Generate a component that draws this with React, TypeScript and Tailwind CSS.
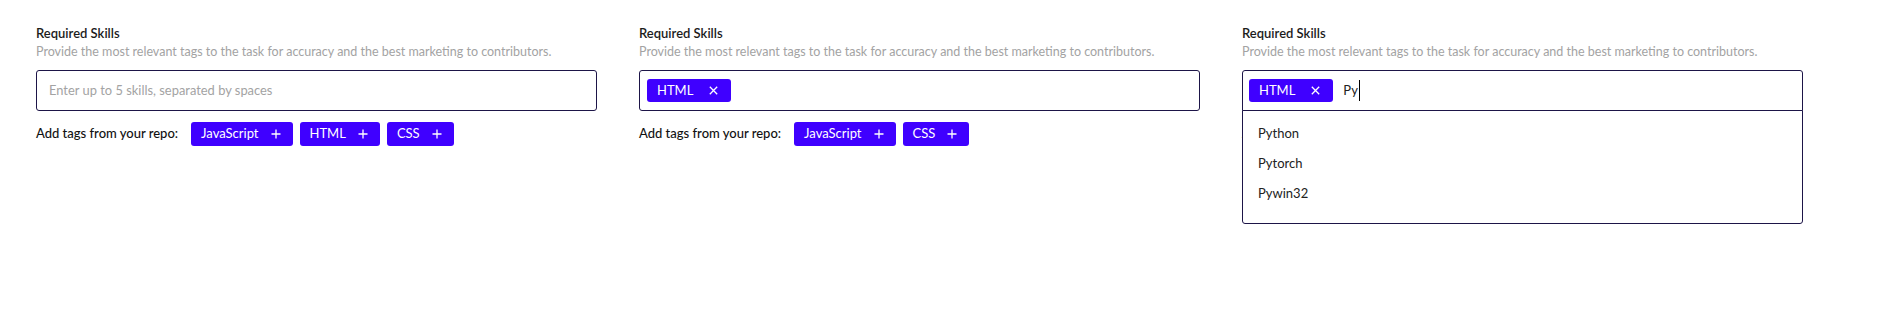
import React from "react";

const font = { fontFamily: "Lato, 'Open Sans', 'Liberation Sans', sans-serif" };

function Plus() {
  return (
    <svg width="10" height="10" viewBox="0 0 10 10" className="shrink-0">
      <path d="M5 0.5V9.5M0.5 5H9.5" stroke="white" strokeWidth="1.3" />
    </svg>
  );
}

function Cross() {
  return (
    <svg width="9" height="9" viewBox="0 0 9 9" className="shrink-0">
      <path d="M0.8 0.8L8.2 8.2M8.2 0.8L0.8 8.2" stroke="white" strokeWidth="1.3" />
    </svg>
  );
}

function AddButton({ label }: { label: string }) {
  return (
    <button className="h-[24px] flex items-center gap-[12px] pl-[10px] pr-[12px] bg-[#3f00ff] text-white text-[13px] rounded-[3px]">
      <span>{label}</span>
      <Plus />
    </button>
  );
}

function Chip({ label }: { label: string }) {
  return (
    <div className="h-[23px] flex items-center gap-[16px] pl-[10px] pr-[13px] bg-[#3f00ff] text-white text-[13px] rounded-[3px] shrink-0">
      <span>{label}</span>
      <Cross />
    </div>
  );
}

function Header() {
  return (
    <>
      <div className="text-[13px] leading-[18px] font-semibold text-[#1c1c1c]">Required Skills</div>
      <div className="mt-[2px] text-[12.5px] leading-[16px] text-[#a3a3a3]">
        Provide the most relevant tags to the task for accuracy and the best marketing to contributors.
      </div>
    </>
  );
}

function TagsRow({ tags }: { tags: string[] }) {
  return (
    <div className="mt-[11px] flex items-center">
      <span className="text-[13px] font-medium text-[#111] mr-[13px] whitespace-nowrap">Add tags from your repo:</span>
      <div className="flex gap-[7px]">
        {tags.map((t) => (
          <AddButton key={t} label={t} />
        ))}
      </div>
    </div>
  );
}

export default function App() {
  return (
    <div className="w-[1898px] h-[313px] bg-white pl-[36px] pt-[24px] flex gap-[42px]" style={font}>
      {/* Panel 1 */}
      <div className="w-[561px] flex flex-col">
        <Header />
        <div className="mt-[10px] h-[41px] border border-[#1d1548] rounded-[3px] flex items-center pl-[12px]">
          <span className="text-[12.9px] text-[#a3a3a3]">Enter up to 5 skills, separated by spaces</span>
        </div>
        <TagsRow tags={["JavaScript", "HTML", "CSS"]} />
      </div>

      {/* Panel 2 */}
      <div className="w-[561px] flex flex-col">
        <Header />
        <div className="mt-[10px] h-[41px] border border-[#1d1548] rounded-[3px] flex items-center pl-[7px]">
          <Chip label="HTML" />
        </div>
        <TagsRow tags={["JavaScript", "CSS"]} />
      </div>

      {/* Panel 3 */}
      <div className="w-[561px] flex flex-col">
        <Header />
        <div className="relative mt-[10px]">
          <div className="h-[41px] border border-[#1d1548] rounded-t-[3px] flex items-center pl-[6px]">
            <Chip label="HTML" />
            <span className="ml-[10px] text-[13px] text-[#222]">Py</span>
            <span className="w-[1px] h-[21px] bg-black ml-[1px]" />
          </div>
          <div className="absolute left-0 right-0 top-[40px] z-10 bg-white border border-[#1d1548] rounded-b-[3px] pt-[8px] pb-[14px]">
            {["Python", "Pytorch", "Pywin32"].map((s) => (
              <div key={s} className="h-[30px] flex items-center pl-[15px] text-[13px] text-[#222]">
                {s}
              </div>
            ))}
          </div>
        </div>
        <TagsRow tags={["JavaScript", "HTML", "CSS"]} />
      </div>
    </div>
  );
}
